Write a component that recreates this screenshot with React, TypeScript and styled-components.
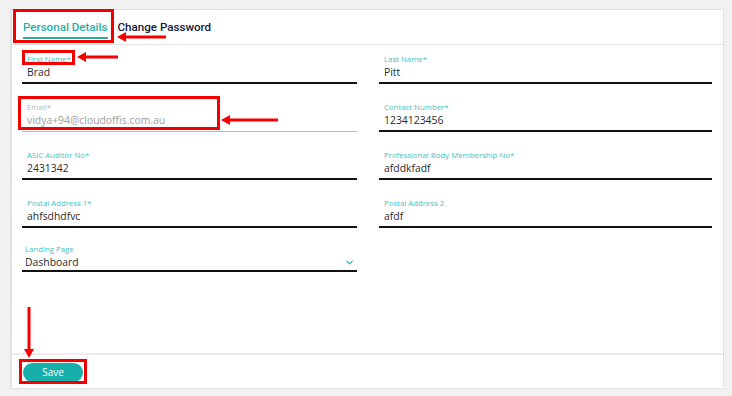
import styled, { createGlobalStyle } from 'styled-components';
import { ChevronDown } from 'lucide-react';

const Global = createGlobalStyle`
    html, body {
        margin: 0;
        padding: 0;
        background: #f1f1f1;
        font-family: 'Open Sans', 'Noto Sans', Arial, sans-serif;
    }
`;

const Page = styled.div`
    position: relative;
    width: 732px;
    height: 396px;
    padding: 9px 8px 7px 10px;
    box-sizing: border-box;
`;

const Carte = styled.div`
    height: 100%;
    display: flex;
    flex-direction: column;
    background: #fff;
    border: 1px solid #e2e2e2;
    border-left-width: 2px;
    box-sizing: border-box;
`;

const Onglets = styled.div`
    display: flex;
    align-items: stretch;
    height: 35px;
    padding-left: 1px;
    border-bottom: 1px solid #e4e4e4;
    box-sizing: border-box;
`;

const Onglet = styled.div<{ $actif?: boolean }>`
    display: flex;
    align-items: center;
    padding: 0 5px 0 ${(p) => (p.$actif ? '10px' : '5px')};
    font-family: Roboto, 'Open Sans', sans-serif;
    font-size: 11.6px;
    font-weight: 500;
    color: ${(p) => (p.$actif ? '#1fb0aa' : '#17173a')};
    span {
        position: relative;
        padding-bottom: 1px;
    }
    span::after {
        content: '';
        display: ${(p) => (p.$actif ? 'block' : 'none')};
        position: absolute;
        left: 0;
        right: 0;
        bottom: -4px;
        height: 2px;
        background: #1fb0aa;
    }
`;

const Corps = styled.div`
    flex: 1;
    padding: 9px 11px 0 10px;
`;

const Grille = styled.div`
    display: grid;
    grid-template-columns: 335px 333px;
    column-gap: 22px;
    row-gap: 18px;
`;

const Champ = styled.div<{ $desactive?: boolean }>`
    display: flex;
    flex-direction: column;
    justify-content: flex-end;
    height: 30px;
    box-sizing: border-box;
    border-bottom: ${(p) => (p.$desactive ? '1px solid #b8b8b8' : '2px solid #111')};
    padding: 0 0 ${(p) => (p.$desactive ? '4px' : '3px')} 5px;
`;

const Libelle = styled.label<{ $desactive?: boolean }>`
    font-size: 7.8px;
    line-height: 10px;
    margin-bottom: 1px;
    color: ${(p) => (p.$desactive ? '#b4b4b4' : '#3cc4be')};
`;

const Valeur = styled.div<{ $desactive?: boolean }>`
    font-size: 10.4px;
    line-height: 14px;
    color: ${(p) => (p.$desactive ? '#9e9e9e' : '#2a2a2a')};
`;

const Selection = styled(Champ)`
    height: 26px;
    padding-left: 3px;
    padding-bottom: 1px;
`;

const LigneSelection = styled.div`
    display: flex;
    align-items: center;
    justify-content: space-between;
    padding-right: 2px;
`;

const Pied = styled.div`
    height: 35px;
    display: flex;
    align-items: center;
    padding-left: 11px;
    border-top: 2px solid #ececec;
    box-sizing: border-box;
`;

const Bouton = styled.button`
    width: 60px;
    height: 19px;
    border: none;
    border-radius: 10px;
    background: #16afa9;
    color: #fff;
    font-family: inherit;
    font-size: 10px;
    padding: 0;
    margin-top: 1px;
`;

const Cadre = styled.div<{ $x: number; $y: number; $l: number; $h: number }>`
    position: absolute;
    left: ${(p) => p.$x}px;
    top: ${(p) => p.$y}px;
    width: ${(p) => p.$l}px;
    height: ${(p) => p.$h}px;
    border: 3px solid #f40000;
    box-sizing: border-box;
    pointer-events: none;
`;

const Calque = styled.svg`
    position: absolute;
    left: 0;
    top: 0;
    pointer-events: none;
`;

const champs = [
    { libelle: 'First Name*', valeur: 'Brad' },
    { libelle: 'Last Name*', valeur: 'Pitt' },
    { libelle: 'Email*', valeur: 'vidya+94@cloudoffis.com.au', desactive: true },
    { libelle: 'Contact Number*', valeur: '1234123456' },
    { libelle: 'ASIC Auditor No*', valeur: '2431342' },
    { libelle: 'Professional Body Membership No*', valeur: 'afddkfadf' },
    { libelle: 'Postal Address 1*', valeur: 'ahfsdhdfvc' },
    { libelle: 'Postal Address 2', valeur: 'afdf' },
];

const Fleche = ({ x1, y1, x2, y2 }: { x1: number; y1: number; x2: number; y2: number }) => {
    // pointe en (x2, y2)
    const a = Math.atan2(y2 - y1, x2 - x1);
    const t = 9;
    const w = 5;
    const bx = x2 - Math.cos(a) * t;
    const by = y2 - Math.sin(a) * t;
    const px = -Math.sin(a) * w;
    const py = Math.cos(a) * w;
    return (
        <g>
            <line x1={x1} y1={y1} x2={bx} y2={by} stroke="#f40000" strokeWidth={3} />
            <polygon points={`${x2},${y2} ${bx + px},${by + py} ${bx - px},${by - py}`} fill="#f40000" />
        </g>
    );
};

const App = () => {
    return (
        <Page>
            <Global />
            <Carte>
                <Onglets>
                    <Onglet $actif>
                        <span>Personal Details</span>
                    </Onglet>
                    <Onglet>
                        <span>Change Password</span>
                    </Onglet>
                </Onglets>
                <Corps>
                    <Grille>
                        {champs.map((c) => (
                            <Champ key={c.libelle} $desactive={c.desactive}>
                                <Libelle $desactive={c.desactive}>{c.libelle}</Libelle>
                                <Valeur $desactive={c.desactive}>{c.valeur}</Valeur>
                            </Champ>
                        ))}
                        <Selection>
                            <Libelle>Landing Page</Libelle>
                            <LigneSelection>
                                <Valeur>Dashboard</Valeur>
                                <ChevronDown size={11} color="#22b3ad" strokeWidth={2.5} />
                            </LigneSelection>
                        </Selection>
                    </Grille>
                </Corps>
                <Pied>
                    <Bouton>Save</Bouton>
                </Pied>
            </Carte>

            <Cadre $x={13} $y={9} $l={101} $h={34} />
            <Cadre $x={22} $y={50} $l={53} $h={15} />
            <Cadre $x={18} $y={96} $l={202} $h={34} />
            <Cadre $x={19} $y={359} $l={68} $h={25} />
            <Calque width={732} height={396}>
                <Fleche x1={166} y1={37} x2={117} y2={37} />
                <Fleche x1={118} y1={57} x2={77} y2={57} />
                <Fleche x1={278} y1={120} x2={221} y2={120} />
                <Fleche x1={29} y1={307} x2={29} y2={358} />
            </Calque>
        </Page>
    );
};

export default App;
